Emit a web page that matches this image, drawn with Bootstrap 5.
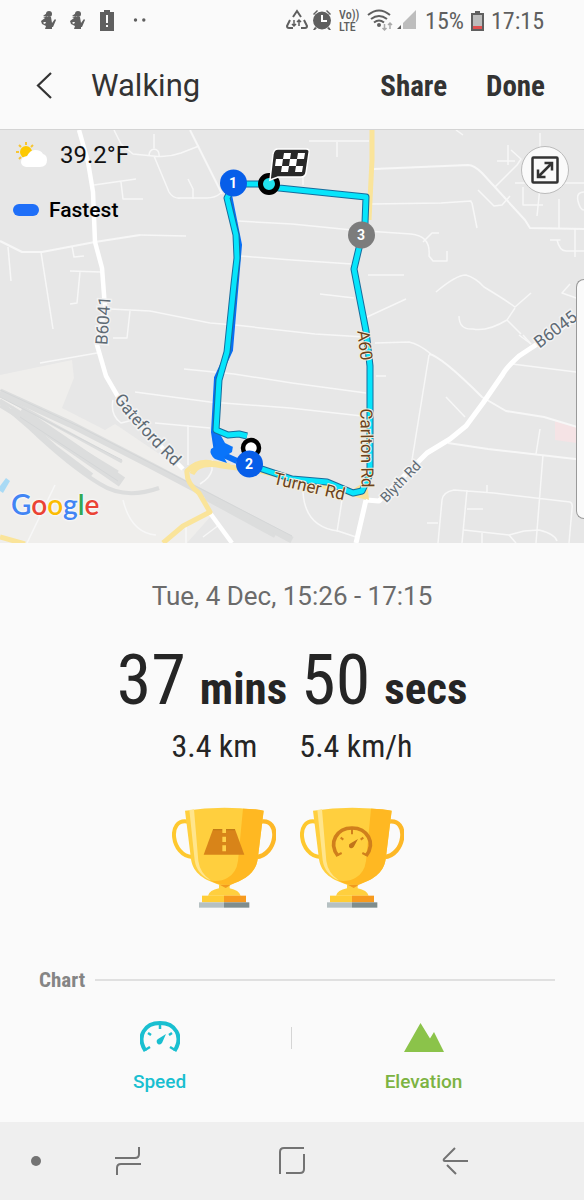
<!DOCTYPE html>
<html lang="en">
<head>
<meta charset="utf-8">
<meta name="viewport" content="width=device-width, initial-scale=1">
<title>Walking</title>
<link href="https://cdn.jsdelivr.net/npm/bootstrap@5.3.0/dist/css/bootstrap.min.css" rel="stylesheet">
<style>
  body { background: #fafafa; color: #252525; font-family: Roboto, "Noto Sans", sans-serif; }
  .narrow { font-family: "Roboto Condensed", "Liberation Sans Narrow", Roboto, sans-serif; }
  .status { height: 42px; padding: 0 40px; gap: 7px; color: #5f5f5f; font-size: 24px; line-height: 42px; }
  .volte { font-size: 12px; line-height: 12px; font-weight: 500; width: 20px; }
  .topbar { height: 88px; padding: 0 39px 0 34px; border-bottom: 1px solid #d4d4d4; color: #333; }
  .topbar h1 { font-size: 31px; line-height: 36px; font-weight: 400; margin-left: 37px; }
  .btn-plain { border: 0; background: none; padding: 0; color: inherit; }
  .actions { gap: 39px; }
  .action { font-size: 29px; line-height: 36px; font-weight: 700; }
  .weather { left: 16px; top: 8px; gap: 12px; font-size: 24px; line-height: 34px; color: #111; }
  .legend-row { left: 13px; top: 68px; gap: 10px; font-size: 21px; line-height: 24px; font-weight: 500; color: #000; }
  .swatch { width: 26px; height: 12px; border-radius: 6px; background: #1f6ff8; }
  .expand { right: 15px; top: 16px; width: 48px; height: 48px; border: 1px solid #bbb; border-radius: 50%; background: #fafafa; }
  .edge-handle { right: 0; top: 149px; width: 8px; height: 240px; border: 1px solid #999; border-right: 0; border-radius: 8px 0 0 8px; background: #fafafa; }
  .google { left: 11px; bottom: 19px; font-family: Lato, sans-serif; font-size: 28px; font-weight: 600; line-height: 40px; text-shadow: 0 0 3px #fff, 0 0 2px #fff; }
  .g-blue { color: #4285f4; }
  .g-red { color: #ea4335; }
  .g-yellow { color: #fbbc05; }
  .g-green { color: #34a853; }
  .when { margin-top: 36px; font-size: 26px; line-height: 34px; color: #6b6b6b; }
  .duration { margin-top: 30px; line-height: 74px; gap: 14px; }
  .big { font-size: 70px; }
  .unit { font-size: 45px; font-weight: 700; }
  .facts { gap: 42px; font-size: 32px; line-height: 40px; }
  .cups { gap: 24px; margin: 41px 8px 0 0; }
  .chart-head { padding: 0 29px 0 39px; margin-top: 56px; gap: 10px; }
  .chart-head h2 { font-size: 21px; line-height: 30px; font-weight: 700; color: #858585; }
  .rule { height: 2px; background: #e0e0e0; }
  .tabs { margin-top: 24px; padding: 0 29px 0 28px; }
  .tab { font-size: 19px; line-height: 26px; font-weight: 500; }
  .tab svg { margin-bottom: 14px; }
  .speed { color: #19bfd0; }
  .elev { color: #7cb342; }
  .divider { width: 1px; height: 22px; background: #d5d5d5; margin-top: 8px; }
  .navkeys { height: 78px; background: #efefef; color: #737373; padding: 0 116px 0 30px; gap: 73px; }
</style>
</head>
<body class="d-flex flex-column min-vh-100">

<div class="status d-flex align-items-center">
  <svg width="112" height="24" viewBox="40 9 112 24" fill="#5f5f5f" aria-hidden="true">
    <g id="runner"><circle cx="49" cy="14" r="3"/><path d="M46 17h5l1 6 3-4 1 1-3 7h-1v2h-7l1-3-4-2-1-3 4-3-2-1zM44 22l-1 1 2 1 1-2z"/><path d="M43 16l4-3v4z"/></g>
    <use href="#runner" x="29"/>
    <path fill-rule="evenodd" d="M100 12h4v-2h6v2h4v19h-14zM106 15h2v8h-2zM106 25h2v2h-2z"/>
    <circle cx="135.500" cy="20" r="1.700"/><circle cx="143.800" cy="20" r="1.700"/>
  </svg>
  <svg class="ms-auto" width="46" height="24" viewBox="289 9 46 24" aria-hidden="true">
    <g fill="none" stroke="#5f5f5f" stroke-width="2"><path d="M296 17l4-6 4 6M293 20l-3 6q0 2 2 2h4M307 20l3 6q0 2-2 2h-4"/><path stroke-width="1.500" d="M297 20v6m-2-2l2 2 2-2M302 26v-6m-2 2l2-2 2 2"/></g>
    <g fill="#5f5f5f"><circle cx="325" cy="20.500" r="9"/><path d="M316 14l4-4 1 1-4 4zM334 14l-4-4-1 1 4 4zM318 27l2 1-2 2h-2zM332 27l-2 1 2 2h2z"/></g><path d="M325 15v6h5" fill="none" stroke="#fff" stroke-width="2"/>
  </svg>
  <span class="volte narrow">Vo))<br>LTE</span>
  <svg width="52" height="24" viewBox="368 9 52 24" aria-hidden="true">
    <g fill="none" stroke="#5f5f5f" stroke-width="2"><path d="M370 15q11-9 22 0M373 19q8-6 16 0M376 22.500q5-4 10 0"/></g><circle cx="381" cy="25" r="2" fill="#5f5f5f"/>
    <path d="M386.500 24v6m-2-2l2 2 2-2M392 29v-6m-2 2l2-2 2 2" fill="none" stroke="#aaa" stroke-width="1.500"/>
    <path d="M403 25v4h-4z" fill="#5f5f5f"/><path d="M418 10v19h-13v-6z" fill="#bdbdbd"/>
  </svg>
  <span class="narrow">15%</span>
  <svg width="13" height="22" viewBox="0 0 13 22" aria-hidden="true"><path d="M0 3h4V1h5v2h4v18H0z" fill="#5f5f5f"/><path d="M2 5h9v14H2z" fill="#bcbcbc"/><path d="M2 16h9v3H2z" fill="#e05050"/></svg>
  <span class="narrow">17:15</span>
</div>

<header class="topbar d-flex align-items-center">
  <button class="btn-plain d-flex" aria-label="Back"><svg width="20" height="28" viewBox="0 0 20 28" fill="none" stroke="#333" stroke-width="2.200"><path d="M17 1L4 13.500 17 26"/></svg></button>
  <h1 class="mb-0 me-auto">Walking</h1>
  <div class="actions d-flex">
    <button class="btn-plain action narrow">Share</button>
    <button class="btn-plain action narrow">Done</button>
  </div>
</header>

<section class="position-relative" aria-label="Route map">
<svg class="d-block w-100" viewBox="0 130 584 413" role="img" aria-label="Walking route around Carlton Road and Turner Road">
  <rect y="130" width="584" height="413" fill="#e7e7e7"/>
  <path fill="#efeeec" d="M0 375L72 360 74 378 62 408 105 430 115 424 183 470 212 515 187 543H0z"/>
  <path fill="#f5e3e5" d="M555 421l29 8v15l-29-4z"/>
  <path fill="#a9daf5" d="M6 478l4 3-7 12-3-2v-5z"/>
  <g fill="none" stroke="#dcdddd" stroke-width="3">
    <path stroke-width="7" d="M0 392L70 424 150 465 205 494 292 540"/>
    <path d="M0 395L122 462M0 400L118 472M0 406L118 478"/><path stroke-width="11" d="M20 412L70 446 122 482"/>
    <path stroke-width="4" d="M0 402L30 428Q70 466 100 484 125 500 159 488M12 408L55 447 92 475M205 498L275 536"/>
  </g>
  <g fill="none" stroke="#d4d6d7" stroke-width="1"><path d="M0 390L80 427 205 491 292 536M0 397L122 460M20 417L118 481"/></g>
  <!-- side streets -->
  <g fill="none" stroke="#f7f7f7" stroke-width="1.500" stroke-linejoin="round">
    <path d="M114 130l7 14 12 10 20 2q14 2 28-3l18-7M154 134v14M149 156q0-6 5-7 6 1 5 8M154 156l15 36q4 7 12 6h26q8 0 14-5M188 179l5 10v10"/>
    <path stroke-width="2" d="M190 130l32 64"/>
    <path stroke-width="2.200" d="M0 241l22 11h20l53-10 45-7"/><path d="M140 235l46 1M8 247l3 34M41 252l12 77M72 246l2 11 10-1M70 271l31 1M80 272l-3 31-7 1M94 185l42-6M121 182l2 17 20 0"/>
    <path d="M110 309l40 2 60 12 25 2 80 9 50 3M130 311l-3 27h-14M40 363l57-10M184 369l50 5 58 9 74 10M135 392l75 10 80 6 72 8M155 423l55 5M188 425v40M113 400q-3 15 8 23l12-3M212 460v10q-2 8-12 14M123 500q8 33 33 35M55 485L27 543M186 527v16M203 537l16-12"/>
    <path d="M238 221l54 3 60 6 59 4q20 2 18 22l4 5h14v-10M423 242l9-9h7M241 256l51 4 60 4M309 141l60 0M337 142v15M303 165v20M320 294l34 4M371 204l70-1 30-2q-1 0 1 2l5 25M368 275h36M367 317l39-18"/>
    <path stroke-width="2" d="M374 169l94-4q6 0 14 8l43 47 5 8 54 1"/>
    <path d="M495 187l22-22 4-6-10-9M497 161h18M508 145v20M478 190l16 16 8-1 8-9M515 183h69M523 187v18h20M540 187l-3 29M559 199v30M584 192q-8 0-6 9t6 9M575 229v28M550 240h10l-3 0q3 12 10 11h17M540 133v20M456 130l7 5M436 292q20-17 30-17 10 3 18 12 20 12 31 20l16-14M515 308l-8 12q-20 12-34 9-14 1-14-13M507 320l14 14M570 284l-8 9 20 7"/>
    <path d="M376 376h10M375 343l34-1q10 2 22 12M429 355l-17 105"/><path stroke-width="2" d="M429 354q12 2 53 43l24 14 38 6 40 12"/>
    <path d="M446 397l19 20M512 364l72 9M519 335l12 9"/><path stroke-width="2" d="M448 443l40 6 96 11"/><path d="M540 429l-4 25M543 455l-7 88M438 543l4-43q1-8 12-10l40 3 76 9q3 1 2 7l-3 34M467 490l-5 53M427 523h11M467 509h16M487 485v8M464 530l45 5 15-4 15-1q16 4 18 11M509 535l7 8M482 532v11M342 500l-5 32M303 492q2 35 35 39l18 6M531 344l-8-9"/>
  </g>
  <!-- main roads -->
  <g fill="none" stroke="#fff" stroke-width="4.500" stroke-linejoin="round">
    <path d="M79 130l9 32 5 30 2 50 7 26 3 40-8 37 9 31 11 19 25 32 41 42M210 513l22 30"/>
    <path stroke-width="5" d="M366 500l13 1 11-11 37-37 23-14 16-13 17-23 20-29q3-6 16-18l65-43M366 500l-10 43"/>
  </g>
  <g fill="none" stroke="#fae49a" stroke-width="5" stroke-linejoin="round">
    <path d="M372 130v30l-3 60M230 466l-18-3q-14-3-25 8-1 12 12 22l11 19-27 14-20 17M0 537l25 7M192 474q6-13 30-8l38 5 60 14 46 12"/>
  </g>
  <path d="M352 490l15-10 2 20-15-6z" fill="#fbe19a"/>
  <!-- route -->
  <path d="M228 190L239 245 230 350 217 378 214 432 217 452 237 461" fill="none" stroke="#096ff5" stroke-width="6"/>
  <path d="M213 434h7l5 9 8 4 0-1-1 6-8 5 3 6-12-4q-6-5-4-10l5-3z" fill="#0974fa"/>
  <g fill="none" stroke-linejoin="round">
    <path d="M247 436l-8-2-11 1-12-5 3-50 8-28 7-68 3-26-1-23-9-37 7-14h25l20 4 87 9-1 26-11 46 12 62 4 35v108l-8 17-9 2-26-11-35-3-33-11" stroke="#176d9d" stroke-width="7"/>
    <path d="M247 436l-8-2-11 1-12-5 3-50 8-28 7-68 3-26-1-23-9-37 7-14h25l20 4 87 9-1 26-11 46 12 62 4 35v108l-8 17-9 2-26-11-35-3-33-11" stroke="#07e5fb" stroke-width="5"/>
  </g>
  <circle cx="251" cy="448" r="8" fill="#fff" stroke="#000" stroke-width="4.500"/>
  <circle cx="269" cy="184" r="8.500" fill="#22e1ed" stroke="#000" stroke-width="5"/>
  <path d="M270 180l3-26q1-5 5-5h28q4 0 3 4l-3 20q-1 4-5 4h-23z" fill="#292929" stroke="#fff" stroke-width="1.500"/>
  <path fill="#fff" d="M284 153h7l-1 6h-7zM298 153h7l-1 6h-7zM276 159h7l-1 7h-7zM290 159h7l-1 7h-7zM282 166h7l-1 6h-7zM296 166h7l-1 6h-7z"/>
  <g font-size="14" font-weight="700" text-anchor="middle"><circle cx="233.500" cy="183" r="13.500" fill="#075ee9"/><circle cx="249.500" cy="464" r="13.500" fill="#075ee9"/><circle cx="361.500" cy="235" r="13.500" fill="#7c7c7c"/><g fill="#fff"><text x="233" y="188">1</text><text x="249" y="469">2</text><text x="361" y="240">3</text></g></g>
  <!-- road names -->
  <g fill="#5e6a74" stroke="#f2f2f2" stroke-width="3" paint-order="stroke" font-size="17" text-anchor="middle">
    <text transform="translate(109 321) rotate(-86)">B6041</text>
    <text transform="translate(559 334) rotate(-37)">B6045</text>
    <text font-size="14" transform="translate(404 485) rotate(-46)">Blyth Rd</text>
    <path id="gate" d="M109 393Q140 435 180 472" fill="none" stroke="none"/>
    <text><textPath href="#gate" startOffset="50%">Gateford Rd</textPath></text>
  </g>
  <g fill="#6b421c" stroke="#f3edda" stroke-width="2" paint-order="stroke" font-size="17" text-anchor="middle">
    <text transform="translate(359 346) rotate(83)">A60</text>
    <text transform="translate(361 448) rotate(89)">Carlton Rd</text>
    <text transform="translate(308 492) rotate(13)">Turner Rd</text>
  </g>
</svg>
<div class="weather position-absolute d-flex align-items-center">
  <svg width="32" height="28" viewBox="0 0 32 28" aria-hidden="true"><circle cx="10" cy="11" r="6" fill="#fdc900"/><path d="M10 1v3M3 4l2 2M17 4l-2 2M0 11h3M3 18l2-2" stroke="#f7c634" stroke-width="2"/><path d="M10 26q-5-1-5-5 0-5 6-6 3-6 8-6 6 0 8 4 4 1 4 6 0 7-7 7z" fill="#fff"/></svg>
  <span>39.2°F</span>
</div>
<div class="legend-row position-absolute d-flex align-items-center"><span class="swatch"></span><span>Fastest</span></div>
<button class="expand btn-plain position-absolute d-flex align-items-center justify-content-center" aria-label="Expand map">
  <svg width="28" height="28" viewBox="0 0 28 28" fill="none" stroke="#333" stroke-width="2.500"><rect x="1.500" y="1.500" width="25" height="25" rx="1"/><path d="M7 21L21 7M13.500 7H21v7.500M7 13.500V21h7.500"/></svg>
</button>
<div class="google position-absolute"><span class="g-blue">G</span><span class="g-red">o</span><span class="g-yellow">o</span><span class="g-blue">g</span><span class="g-green">l</span><span class="g-red">e</span></div>
<div class="edge-handle position-absolute"></div>
</section>

<main class="text-center">
  <div class="when">Tue, 4 Dec, 15:26 - 17:15</div>
  <div class="duration narrow d-flex justify-content-center align-items-baseline">
    <span class="big">37</span><span class="unit">mins</span><span class="big">50</span><span class="unit">secs</span>
  </div>
  <div class="facts narrow d-flex justify-content-center"><span>3.4 km</span><span>5.4 km/h</span></div>
  <div class="cups d-flex justify-content-center">
    <svg width="104" height="102" viewBox="37 38 312 306" role="img" aria-label="Longest distance">
      <defs><g id="cup">
        <path d="M302 82C367 70 352 185 289 188" fill="none" stroke="#fdb827" stroke-width="13"/>
        <path d="M85 82C20 70 35 185 98 188" fill="none" stroke="#fec82e" stroke-width="12"/>
        <path d="M76 49Q194 32 312 49L294 195C288 238 252 258 210 271V282Q238 288 243 304H145Q149 288 178 282V271C136 258 100 238 94 195z" fill="#ffcf3e"/>
        <path d="M250 43Q290 43 312 49L294 195C288 238 252 258 214 271L180 270Q168 268 150 258 180 264 204 250 230 236 235 200z" fill="#ffb822"/>
        <path d="M180 271h34l-16 10z" fill="#f29a1d"/><path d="M89 47l14-2 13 155q5 36 37 58-42-18-48-60z" fill="#ffe58c"/>
        <path d="M127 304h66v20h-66z" fill="#ffcd36"/><path d="M193 304h66v20h-66z" fill="#f79a1e"/><path d="M118 324h75v16h-75z" fill="#b5c0c2"/><path d="M193 324h76v16h-76z" fill="#7f8d8d"/>
      </g></defs>
      <use href="#cup"/><path d="M160 105h66l28 76H132z" fill="#d88419"/><path d="M160 106h66" stroke="#a9650e" stroke-width="2"/><path d="M188 104h11v12h-11zM188 127h11v16h-11zM188 153h11v18h-11z" fill="#ffd047"/>
    </svg>
    <svg width="104" height="102" viewBox="37 38 312 306" role="img" aria-label="Top speed">
      <use href="#cup"/><path d="M151 185C120 145 148 101 193 101S266 145 235 185" fill="none" stroke="#d07f1c" stroke-width="11"/><path d="M193 104v16M159 130l8 6M227 130l-8 6M150 182l12-6M236 182l-12-6" stroke="#d07f1c" stroke-width="6"/><path d="M211 134l-13 24q-9 8-14-1-2-7 5-10z" fill="#c0741a"/>
    </svg>
  </div>
  <div class="chart-head d-flex align-items-center"><h2 class="narrow mb-0">Chart</h2><div class="rule flex-grow-1"></div></div>
  <div class="tabs d-flex">
    <button class="tab btn-plain speed w-50 d-flex flex-column align-items-center"><svg width="40" height="36" viewBox="0 0 40 36"><path d="M5.500 32C-4 17 5 4 20 4S44 17 34.500 32" fill="none" stroke="currentColor" stroke-width="4"/><path d="M20 4v6M8 14l3 2M32 14l-3 2M5 31l5-3M35 31l-5-3" stroke="currentColor" stroke-width="2.500"/><path d="M26 15l-4 9q-3 3-5 0-1-3 1-4z" fill="currentColor"/></svg>Speed</button>
    <div class="divider"></div>
    <button class="tab btn-plain elev w-50 d-flex flex-column align-items-center"><svg width="40" height="36" viewBox="0 0 40 36"><path d="M0 33L16.500 4 26 19.500 30 13 40 33z" fill="#8bc34a"/></svg>Elevation</button>
  </div>
</main>

<nav class="navkeys mt-auto d-flex align-items-center" aria-label="System keys">
  <button class="btn-plain d-flex" aria-label="Pin bar"><svg width="12" height="12"><circle cx="6" cy="6" r="5" fill="#737373"/></svg></button>
  <div class="d-flex flex-grow-1 justify-content-between align-items-center">
    <button class="btn-plain d-flex" aria-label="Recent apps"><svg width="26" height="30" viewBox="0 0 26 30" fill="none" stroke="#737373" stroke-width="2"><path d="M0 12h20q4 0 4-4V1M26 18H6q-4 0-4 4v7"/></svg></button>
    <button class="btn-plain d-flex" aria-label="Home"><svg width="26" height="28" viewBox="0 0 26 28" fill="none" stroke="#737373" stroke-width="2"><path d="M1 27V5q0-4 4-4h20M25 7v15q0 4-4 4H7"/></svg></button>
    <button class="btn-plain d-flex" aria-label="Back key"><svg width="26" height="28" viewBox="0 0 26 28" fill="none" stroke="#737373" stroke-width="2"><path d="M13 1L2 12q-1 2 1 2h23M5 18l9 9"/></svg></button>
  </div>
</nav>
<script src="https://cdn.jsdelivr.net/npm/bootstrap@5.3.0/dist/js/bootstrap.bundle.min.js"></script>
</body>
</html>
